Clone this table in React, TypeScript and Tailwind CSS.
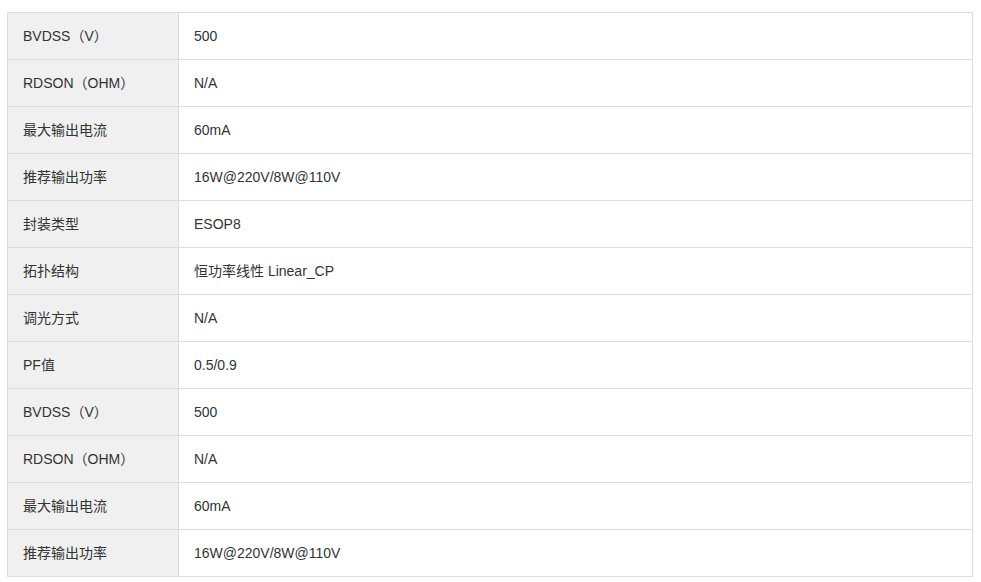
const rows: [string, string][] = [
  ["BVDSS（V）", "500"],
  ["RDSON（OHM）", "N/A"],
  ["最大输出电流", "60mA"],
  ["推荐输出功率", "16W@220V/8W@110V"],
  ["封装类型", "ESOP8"],
  ["拓扑结构", "恒功率线性 Linear_CP"],
  ["调光方式", "N/A"],
  ["PF值", "0.5/0.9"],
  ["BVDSS（V）", "500"],
  ["RDSON（OHM）", "N/A"],
  ["最大输出电流", "60mA"],
  ["推荐输出功率", "16W@220V/8W@110V"],
];

export default function App() {
  return (
    <div
      className="w-[981px] h-[582px] bg-white pt-3 pl-[7px] text-[14px] text-[#333]"
      style={{ fontFamily: '"Liberation Sans", Arial, "Noto Sans CJK SC", sans-serif' }}
    >
      <div className="w-[966px] border-t border-l border-[#dddddd]">
        {rows.map(([label, value], i) => (
          <div key={i} className="flex h-[47px] border-b border-r border-[#dddddd]">
            <div className="w-[171px] shrink-0 bg-[#f0f0f0] border-r border-[#dddddd] flex items-center pl-[15px]">
              {label}
            </div>
            <div className="flex-1 flex items-center pl-[15px]">{value}</div>
          </div>
        ))}
      </div>
    </div>
  );
}
